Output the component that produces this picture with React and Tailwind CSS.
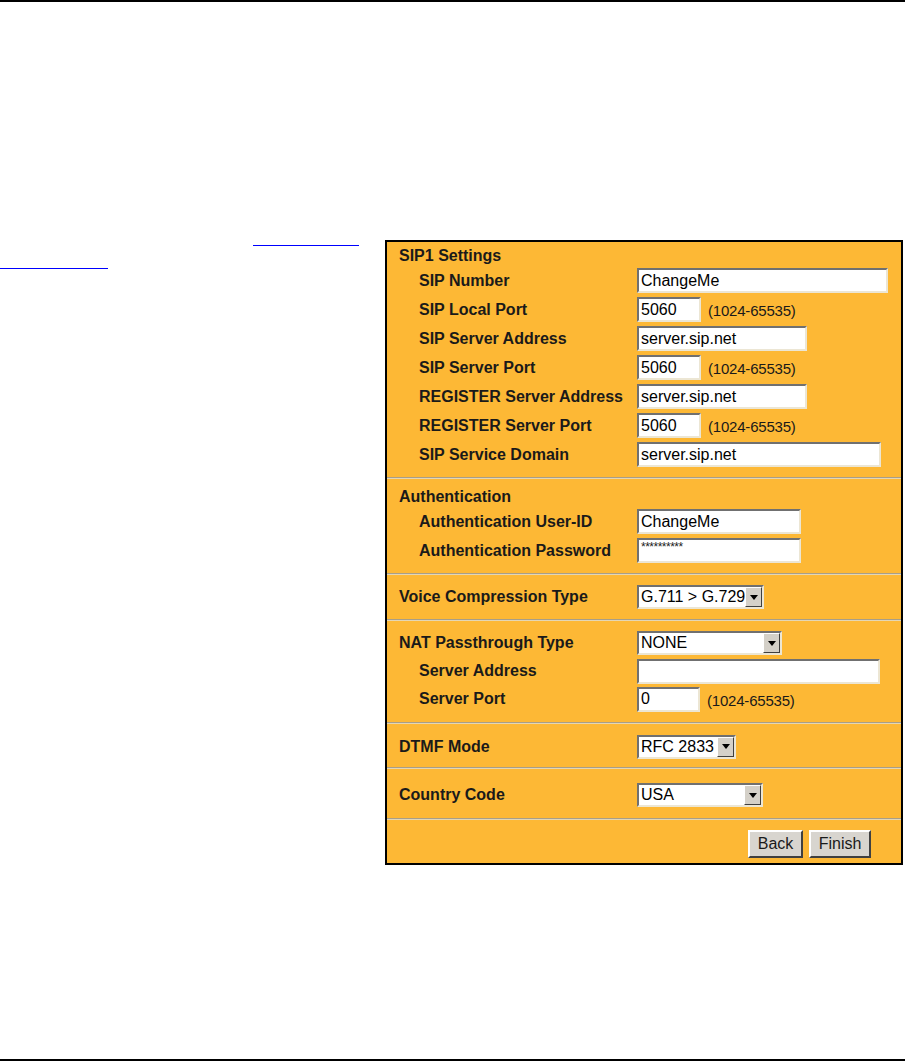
import React from "react";

const font = { fontFamily: '"Liberation Sans", Arial, sans-serif' };

function TextBox({ w, value, small }) {
  return (
    <div
      className={`h-[25px] bg-white border-2 border-t-[#707070] border-l-[#707070] border-b-[#ece6d4] border-r-[#ece6d4] flex ${small ? "items-start pt-[1px]" : "items-center"} pl-[2px] overflow-hidden`}
      style={{ width: w }}
    >
      {small ? (
        <span className="text-[12px] leading-[12px] text-[#222] tracking-[-0.5px]">{value}</span>
      ) : (
        <span className="text-[16px] leading-none text-black">{value}</span>
      )}
    </div>
  );
}

function Select({ w, value }) {
  return (
    <div
      className="h-[24px] bg-white border-2 border-t-[#707070] border-l-[#707070] border-b-[#ece6d4] border-r-[#ece6d4] flex items-center overflow-hidden"
      style={{ width: w }}
    >
      <span className="flex-1 pl-[2px] text-[16px] leading-none text-black whitespace-nowrap overflow-hidden">{value}</span>
      <div className="w-[17px] h-[20px] shrink-0 bg-[#d4d0c8] border border-t-white border-l-white border-b-[#404040] border-r-[#404040] flex items-center justify-center">
        <svg width="8" height="5" viewBox="0 0 8 5">
          <path d="M0 0h8L4 5z" fill="#000" />
        </svg>
      </div>
    </div>
  );
}

function Range() {
  return <span className="ml-[7px] mt-[4px] text-[15px] text-[#1a1a1a] tracking-[-0.2px]">(1024-65535)</span>;
}

function Row({ label, h = 29, sub = true, children }) {
  return (
    <div className="flex items-center" style={{ height: h }}>
      <div className={`w-[250px] shrink-0 ${sub ? "pl-[32px]" : "pl-[12px]"} font-bold text-[16px] text-[#1a1a1a] whitespace-nowrap`}>
        {label}
      </div>
      <div className="flex items-center">{children}</div>
    </div>
  );
}

function Heading({ children, h }) {
  return (
    <div className="pl-[12px] font-bold text-[16px] text-[#1a1a1a] flex items-center" style={{ height: h }}>
      {children}
    </div>
  );
}

function Sep() {
  return <div className="h-[2px] border-t border-t-[#a89e88] border-b border-b-[#e4d6b4]" />;
}

function Button({ children, w }) {
  return (
    <div
      className="h-[28px] bg-[#d8d5cf] border-2 border-t-white border-l-white border-b-[#404040] border-r-[#404040] flex items-center justify-center text-[16px] text-[#1a1a1a]"
      style={{ width: w }}
    >
      {children}
    </div>
  );
}

export default function App() {
  return (
    <div className="w-[907px] h-[1061px] bg-white relative flex flex-col" style={font}>
      <div className="h-[2px] w-[905px] bg-black shrink-0" />
      <div className="flex mt-[238px]">
        <div className="w-[385px] shrink-0">
          <div className="ml-[253px] mt-[5px] w-[106px] h-px bg-[#0000ff]" />
          <div className="mt-[22px] w-[108px] h-px bg-[#0000ff]" />
        </div>
        <div className="w-[518px] h-[625px] border-2 border-black bg-[#fdb835] flex flex-col">
          <div className="pt-[3px] pb-[8px]">
            <Heading h={21}>SIP1 Settings</Heading>
            <Row label="SIP Number"><TextBox w={251} value="ChangeMe" /></Row>
            <Row label="SIP Local Port"><TextBox w={64} value="5060" /><Range /></Row>
            <Row label="SIP Server Address"><TextBox w={170} value="server.sip.net" /></Row>
            <Row label="SIP Server Port"><TextBox w={64} value="5060" /><Range /></Row>
            <Row label="REGISTER Server Address"><TextBox w={170} value="server.sip.net" /></Row>
            <Row label="REGISTER Server Port"><TextBox w={64} value="5060" /><Range /></Row>
            <Row label="SIP Service Domain"><TextBox w={244} value="server.sip.net" /></Row>
          </div>
          <Sep />
          <div className="pt-[8px] pb-[8px]">
            <Heading h={20}>Authentication</Heading>
            <Row label="Authentication User-ID"><TextBox w={164} value="ChangeMe" /></Row>
            <Row label="Authentication Password"><TextBox w={164} value="**********" small /></Row>
          </div>
          <Sep />
          <div className="pt-[8px] pb-[8px]">
            <Row label="Voice Compression Type" sub={false} h={28}><Select w={127} value="G.711 > G.729" /></Row>
          </div>
          <Sep />
          <div className="pt-[8px] pb-[9px]">
            <Row label="NAT Passthrough Type" sub={false} h={28}><Select w={145} value="NONE" /></Row>
            <Row label="Server Address" h={28}><TextBox w={243} value="" /></Row>
            <Row label="Server Port" h={28}><TextBox w={63} value="0" /><Range /></Row>
          </div>
          <Sep />
          <div className="pt-[8px] pb-[6px]">
            <Row label="DTMF Mode" sub={false} h={29}><Select w={99} value="RFC 2833" /></Row>
          </div>
          <Sep />
          <div className="pt-[12px] pb-[9px]">
            <Row label="Country Code" sub={false} h={28}><Select w={126} value="USA" /></Row>
          </div>
          <Sep />
          <div className="pt-[10px] flex justify-end gap-[6px] pr-[30px]">
            <Button w={55}>Back</Button>
            <Button w={62}>Finish</Button>
          </div>
        </div>
      </div>
      <div className="flex-1" />
      <div className="h-[2px] w-[905px] bg-black shrink-0" />
    </div>
  );
}
